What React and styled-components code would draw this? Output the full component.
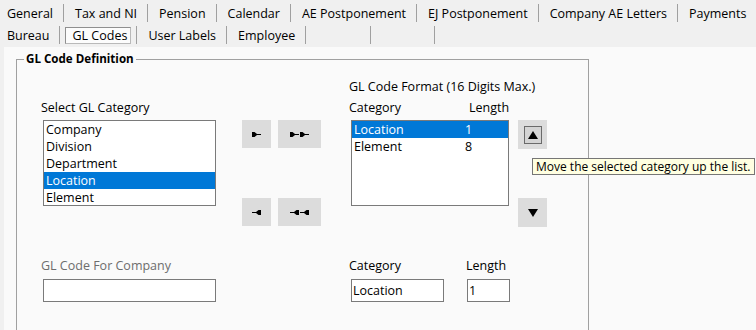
import React from "react";
import styled, { createGlobalStyle } from "styled-components";

const GlobalStyle = createGlobalStyle`
  html, body {
    margin: 0;
    padding: 0;
  }
  body {
    width: 756px;
    height: 330px;
    overflow: hidden;
    background: #f0f0f0;
    font-family: "Open Sans", "Noto Sans", sans-serif;
    font-size: 12.5px;
    color: #000;
  }
`;

const TabStrip = styled.div`
  height: 47px;
  box-sizing: border-box;
  padding-top: 4px;
  display: flex;
  flex-direction: column;
  gap: 4px;
`;

const TabRow = styled.div`
  display: flex;
  height: 18px;
`;

const Tab = styled.div`
  display: flex;
  align-items: center;
  box-sizing: border-box;
  padding: ${(p) => (p.$active ? "0 5px 0 5px" : "0 10px 0 11px")};
  width: ${(p) => (p.$w ? `${p.$w}px` : "auto")};
  border-right: 1px solid #a0a0a0;
  white-space: nowrap;
  line-height: 18px;
  &:first-child {
    padding-left: 7px;
  }
`;

const TabLabel = styled.span`
  display: block;
  height: 18px;
  line-height: 19px;
  box-sizing: border-box;
  ${(p) =>
    p.$active &&
    `
    height: 17px;
    padding: 0 3px 0 6px;
    line-height: 16px;
    background: #fcfcfc;
    border: 1px solid #b9b9b9;
    border-left-color: #8f8f8f;
    border-top-color: #8f8f8f;
  `}
`;

const Panel = styled.div`
  margin-left: 4px;
  height: 283px;
  box-sizing: border-box;
  padding-top: 4px;
  background: #fafafa;
  overflow: hidden;
`;

const Group = styled.fieldset`
  margin: 0 0 0 12px;
  padding: 0;
  width: 573px;
  height: 320px;
  box-sizing: border-box;
  border: 1px solid #a0a0a0;
  min-inline-size: 0;
`;

const Legend = styled.legend`
  margin-left: 7px;
  padding: 0 2px;
  font-size: 11.6px;
  font-weight: 700;
  line-height: 16px;
`;

const Body = styled.div`
  padding: 12px 0 0 24px;
`;

const TopGrid = styled.div`
  display: grid;
  grid-template-columns: 201px 107px 169px 29px;
  grid-template-rows: 21px 20px auto;
  align-items: start;
`;

const Label = styled.div`
  grid-column: ${(p) => p.$col || "auto"};
  grid-row: ${(p) => p.$row || "auto"};
  line-height: 16px;
  white-space: nowrap;
  color: ${(p) => (p.$disabled ? "#6d6d6d" : "#000")};
`;

const HeaderRow = styled.div`
  grid-column: 3;
  grid-row: 2;
  display: flex;
  line-height: 16px;
`;

const HeaderCell = styled.span`
  width: ${(p) => (p.$w ? `${p.$w}px` : "auto")};
`;

const ListBox = styled.div`
  grid-column: ${(p) => p.$col};
  grid-row: 3;
  margin-left: 2px;
  width: ${(p) => p.$w}px;
  height: 86px;
  box-sizing: border-box;
  border: 1px solid #7a7a7a;
  background: #fff;
`;

const ListItem = styled.div`
  display: flex;
  height: 17px;
  line-height: 17px;
  padding-left: 2px;
  background: ${(p) => (p.$selected ? "#0078d7" : "transparent")};
  color: ${(p) => (p.$selected ? "#fff" : "#000")};
`;

const Cell = styled.span`
  width: ${(p) => (p.$w ? `${p.$w}px` : "auto")};
`;

const ArrowStack = styled.div`
  grid-column: 2;
  grid-row: 3;
  display: flex;
  flex-direction: column;
  gap: 50px;
`;

const ArrowPair = styled.div`
  display: flex;
  gap: 7px;
`;

const GrayButton = styled.button`
  width: ${(p) => p.$w}px;
  height: ${(p) => p.$h || 28}px;
  padding: 0;
  border: none;
  background: #dcdcdc;
  display: flex;
  align-items: center;
  justify-content: center;
  gap: 1px;
`;

const MoveStack = styled.div`
  grid-column: 4;
  grid-row: 3;
  position: relative;
  display: flex;
  flex-direction: column;
  gap: 49px;
`;

const FocusBox = styled.span`
  width: 18px;
  height: 18px;
  box-sizing: border-box;
  border: 1px solid #6a6a6a;
  background: #d4d4d4;
  display: flex;
  align-items: center;
  justify-content: center;
`;

const Tooltip = styled.div`
  position: absolute;
  left: 14px;
  top: 38px;
  z-index: 2;
  height: 17px;
  box-sizing: border-box;
  padding: 0 3px;
  font-size: 12px;
  line-height: 15px;
  white-space: nowrap;
  background: #ffffe1;
  border: 1px solid #767676;
  color: #000;
`;

const BottomGrid = styled.div`
  margin-top: 31px;
  display: grid;
  grid-template-columns: 308px 117px auto;
  grid-template-rows: 21px 23px;
  align-items: start;
`;

const TextBox = styled.input`
  margin-left: ${(p) => p.$ml ?? 2}px;
  width: ${(p) => p.$w}px;
  height: 23px;
  box-sizing: border-box;
  padding: 0 1px;
  border: 1px solid #7a7a7a;
  border-radius: 0;
  outline: none;
  background: #fff;
  font: inherit;
  color: #000;
`;

function ArrowGlyph({ left }) {
  return (
    <svg width="9" height="5" viewBox="0 0 9 5">
      <path
        d="M0 0H2.5L5 2H9V3H5L2.5 5H0Z"
        fill="#000"
        transform={left ? "translate(9 0) scale(-1 1)" : undefined}
      />
    </svg>
  );
}

function Triangle({ down }) {
  return (
    <svg width="10" height="8" viewBox="0 0 10 8">
      <path d={down ? "M0 0H10L5 8Z" : "M5 0L10 8H0Z"} fill="#000" />
    </svg>
  );
}

const tabsTop = [
  "General",
  "Tax and NI",
  "Pension",
  "Calendar",
  "AE Postponement",
  "EJ Postponement",
  "Company AE Letters",
  "Payments",
];

const categories = ["Company", "Division", "Department", "Location", "Element"];

const format = [
  { name: "Location", length: 1 },
  { name: "Element", length: 8 },
];

export default function App() {
  return (
    <>
      <GlobalStyle />
      <TabStrip>
        <TabRow>
          {tabsTop.map((t) => (
            <Tab key={t}>
              <TabLabel>{t}</TabLabel>
            </Tab>
          ))}
        </TabRow>
        <TabRow>
          <Tab>
            <TabLabel>Bureau</TabLabel>
          </Tab>
          <Tab $active>
            <TabLabel $active>GL Codes</TabLabel>
          </Tab>
          <Tab>
            <TabLabel>User Labels</TabLabel>
          </Tab>
          <Tab>
            <TabLabel>Employee</TabLabel>
          </Tab>
          <Tab $w={65} />
          <Tab $w={64} />
        </TabRow>
      </TabStrip>

      <Panel>
        <Group>
          <Legend>GL Code Definition</Legend>
          <Body>
            <TopGrid>
              <Label $col={3} $row={1}>
                GL Code Format (16 Digits Max.)
              </Label>
              <Label $col={1} $row={2}>
                Select GL Category
              </Label>
              <HeaderRow>
                <HeaderCell $w={120}>Category</HeaderCell>
                <HeaderCell>Length</HeaderCell>
              </HeaderRow>

              <ListBox $col={1} $w={173}>
                {categories.map((c) => (
                  <ListItem key={c} $selected={c === "Location"}>
                    {c}
                  </ListItem>
                ))}
              </ListBox>

              <ArrowStack>
                <ArrowPair>
                  <GrayButton $w={29}>
                    <ArrowGlyph />
                  </GrayButton>
                  <GrayButton $w={43}>
                    <ArrowGlyph />
                    <ArrowGlyph />
                  </GrayButton>
                </ArrowPair>
                <ArrowPair>
                  <GrayButton $w={29}>
                    <ArrowGlyph left />
                  </GrayButton>
                  <GrayButton $w={43}>
                    <ArrowGlyph left />
                    <ArrowGlyph left />
                  </GrayButton>
                </ArrowPair>
              </ArrowStack>

              <ListBox $col={3} $w={158}>
                {format.map((f, i) => (
                  <ListItem key={f.name} $selected={i === 0}>
                    <Cell $w={111}>{f.name}</Cell>
                    <Cell>{f.length}</Cell>
                  </ListItem>
                ))}
              </ListBox>

              <MoveStack>
                <GrayButton $w={29} $h={29}>
                  <FocusBox>
                    <Triangle />
                  </FocusBox>
                </GrayButton>
                <GrayButton $w={29} $h={29}>
                  <Triangle down />
                </GrayButton>
                <Tooltip>Move the selected category up the list.</Tooltip>
              </MoveStack>
            </TopGrid>

            <BottomGrid>
              <Label $disabled>GL Code For Company</Label>
              <Label>Category</Label>
              <Label>Length</Label>
              <TextBox $w={173} readOnly value="" />
              <TextBox $w={93} readOnly value="Location" />
              <TextBox $w={43} $ml={1} readOnly value="1" />
            </BottomGrid>
          </Body>
        </Group>
      </Panel>
    </>
  );
}
